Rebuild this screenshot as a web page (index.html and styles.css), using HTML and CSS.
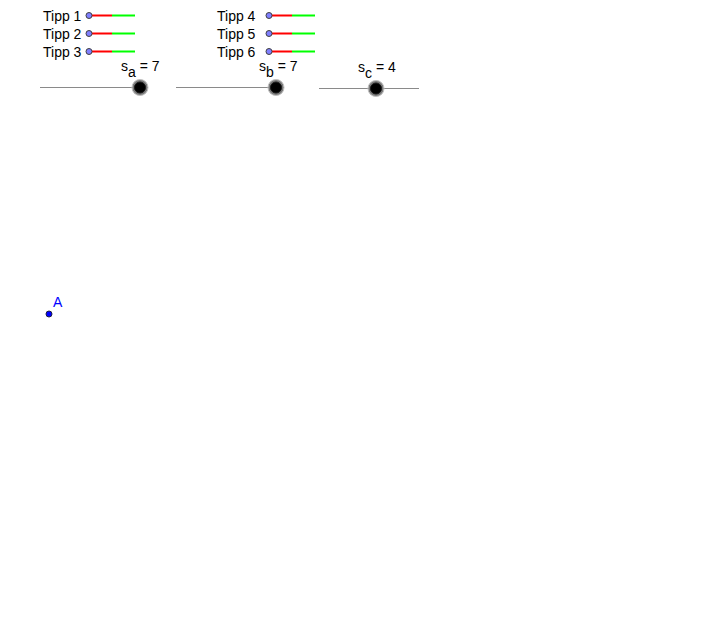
FILE: index.html
```html
<!DOCTYPE html>
<html lang="de">
<head>
<meta charset="utf-8">
<title>Dreieck – Tipps</title>
<link rel="stylesheet" href="styles.css">
</head>
<body>
<div class="canvas">
  <svg class="board" width="714" height="628" viewBox="0 0 714 628" xmlns="http://www.w3.org/2000/svg">
    <!-- Tipp-Kontrollkästchen, linke Spalte -->
    <g class="tipp">
      <text x="43" y="21">Tipp 1</text>
      <line class="off" x1="92" y1="15.5" x2="112" y2="15.5"/>
      <line class="on" x1="112" y1="15.5" x2="135" y2="15.5"/>
      <circle cx="89" cy="15.5" r="3"/>

      <text x="43" y="39">Tipp 2</text>
      <line class="off" x1="92" y1="33.5" x2="112" y2="33.5"/>
      <line class="on" x1="112" y1="33.5" x2="135" y2="33.5"/>
      <circle cx="89" cy="33.5" r="3"/>

      <text x="43" y="57">Tipp 3</text>
      <line class="off" x1="92" y1="51.5" x2="112" y2="51.5"/>
      <line class="on" x1="112" y1="51.5" x2="135" y2="51.5"/>
      <circle cx="89" cy="51.5" r="3"/>
    </g>

    <!-- Tipp-Kontrollkästchen, rechte Spalte -->
    <g class="tipp">
      <text x="217" y="21">Tipp 4</text>
      <line class="off" x1="272" y1="15.5" x2="292" y2="15.5"/>
      <line class="on" x1="292" y1="15.5" x2="315" y2="15.5"/>
      <circle cx="269" cy="15.5" r="3"/>

      <text x="217" y="39">Tipp 5</text>
      <line class="off" x1="272" y1="33.5" x2="292" y2="33.5"/>
      <line class="on" x1="292" y1="33.5" x2="315" y2="33.5"/>
      <circle cx="269" cy="33.5" r="3"/>

      <text x="217" y="57">Tipp 6</text>
      <line class="off" x1="272" y1="51.5" x2="292" y2="51.5"/>
      <line class="on" x1="292" y1="51.5" x2="315" y2="51.5"/>
      <circle cx="269" cy="51.5" r="3"/>
    </g>

    <!-- Schieberegler für die Seitenlängen -->
    <g class="slider">
      <text x="121" y="71">s<tspan class="sub" dy="6">a</tspan><tspan dy="-6"> = 7</tspan></text>
      <line x1="40" y1="87.5" x2="140" y2="87.5"/>
      <circle class="ring" cx="140" cy="87.5" r="8"/>
      <circle class="knob" cx="140" cy="87.5" r="5.5"/>
    </g>
    <g class="slider">
      <text x="259" y="71">s<tspan class="sub" dy="6">b</tspan><tspan dy="-6"> = 7</tspan></text>
      <line x1="176" y1="87.5" x2="276" y2="87.5"/>
      <circle class="ring" cx="276" cy="87.5" r="8"/>
      <circle class="knob" cx="276" cy="87.5" r="5.5"/>
    </g>
    <g class="slider">
      <text x="358" y="72">s<tspan class="sub" dy="6">c</tspan><tspan dy="-6"> = 4</tspan></text>
      <line x1="319" y1="88.5" x2="419" y2="88.5"/>
      <circle class="ring" cx="376" cy="88.5" r="8"/>
      <circle class="knob" cx="376" cy="88.5" r="5.5"/>
    </g>

    <!-- Punkt A -->
    <g class="point">
      <circle cx="49" cy="314" r="3"/>
      <text x="53" y="307">A</text>
    </g>
  </svg>
</div>
</body>
</html>
```

FILE: styles.css
```css
html, body {
  margin: 0;
  padding: 0;
  background: #ffffff;
}

.canvas {
  width: 714px;
  height: 628px;
  overflow: hidden;
}

.board {
  display: block;
  font-family: "Liberation Sans", Arial, sans-serif;
  font-size: 14px;
}

.tipp text,
.slider text {
  fill: #000000;
}

.tipp .off {
  stroke: #ff0000;
  stroke-width: 2;
}

.tipp .on {
  stroke: #00ff00;
  stroke-width: 2;
}

.tipp circle {
  fill: #7f7fff;
  stroke: #404040;
  stroke-width: 1;
}

.slider line {
  stroke: #8a8a8a;
  stroke-width: 1;
}

.slider .ring {
  fill: #7a7a7a;
  stroke: #c0c0c0;
  stroke-width: 1;
}

.slider .knob {
  fill: #000000;
  stroke: #1a1a1a;
  stroke-width: 1;
}

.point circle {
  fill: #0000ff;
  stroke: #202040;
  stroke-width: 1;
}

.point text {
  fill: #0000ff;
}
```
